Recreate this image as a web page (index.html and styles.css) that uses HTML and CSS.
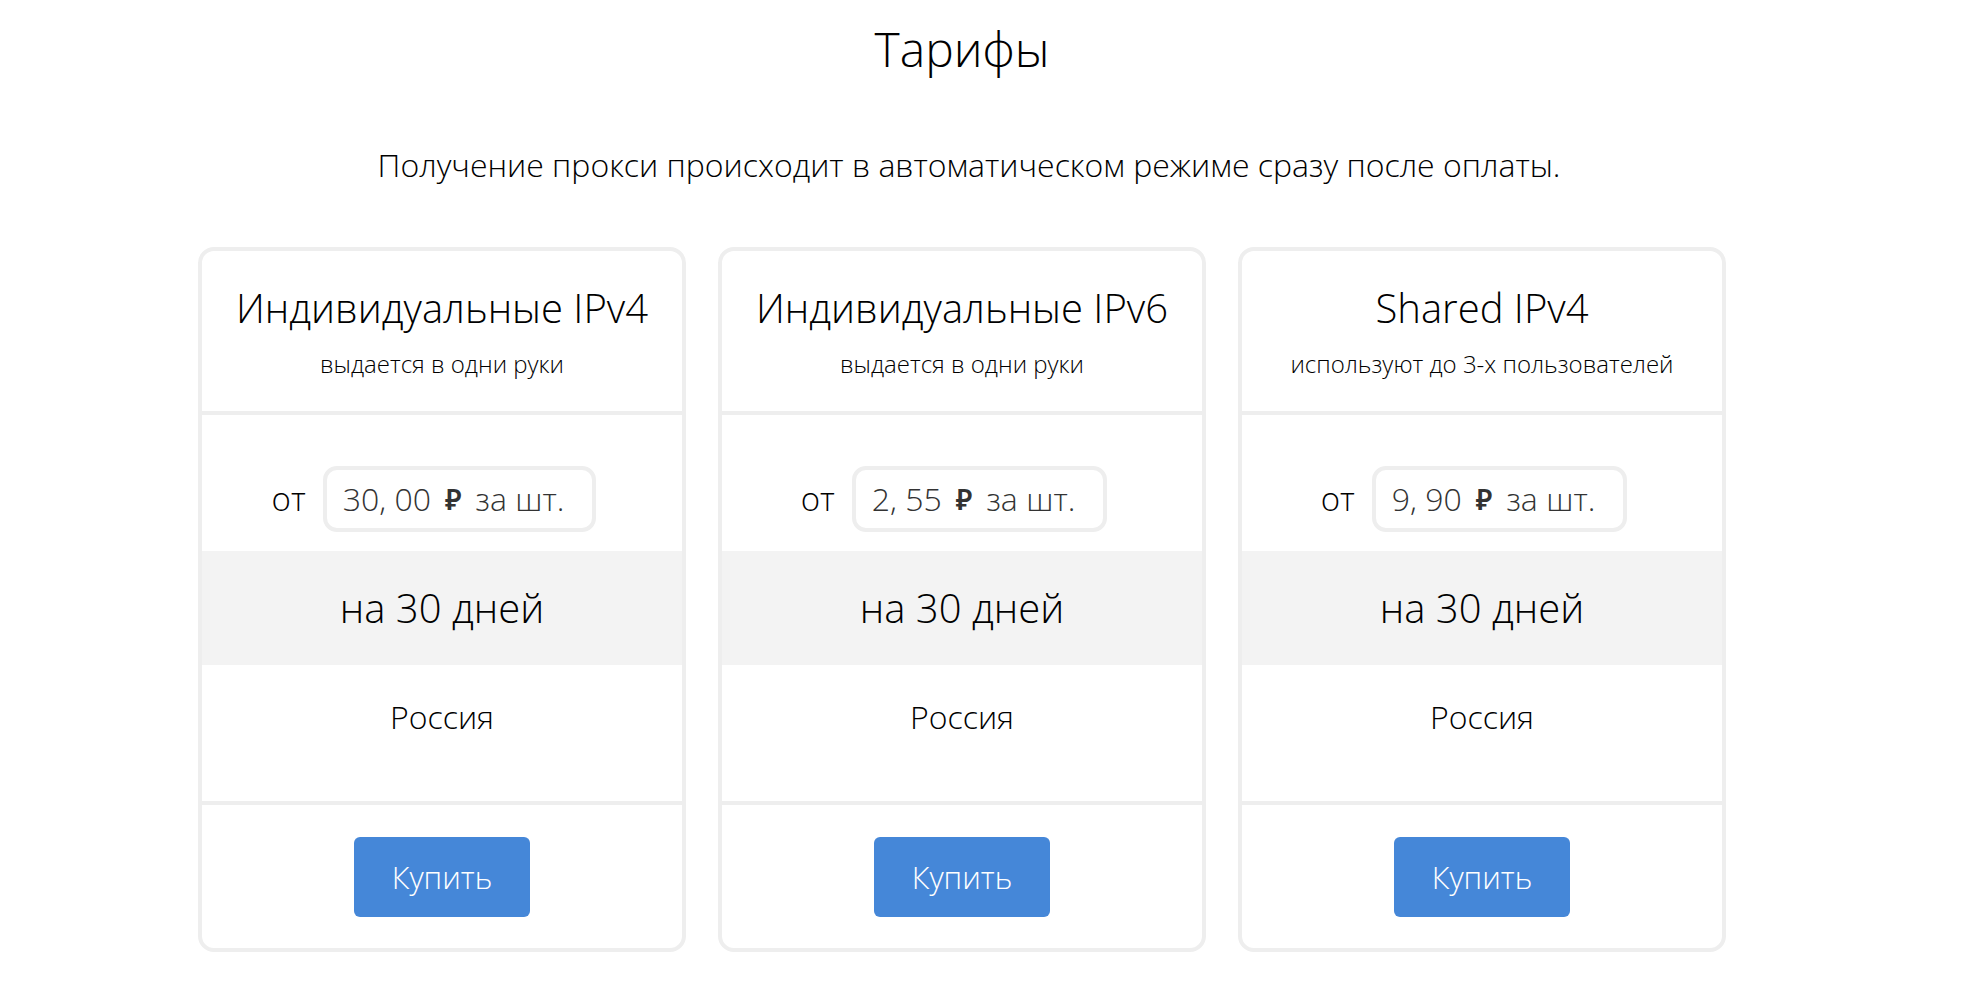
FILE: index.html
```html
<!DOCTYPE html>
<html lang="ru">
<head>
<meta charset="utf-8">
<title>Тарифы</title>
<link rel="stylesheet" href="styles.css">
</head>
<body>
<div class="page">
  <h1 class="title">Тарифы</h1>
  <p class="lead">Получение прокси происходит в автоматическом режиме сразу после оплаты.</p>
  <div class="plans">
    <div class="plan">
      <div class="plan-head">
        <h2 class="plan-name">Индивидуальные IPv4</h2>
        <div class="plan-note">выдается в одни руки</div>
      </div>
      <div class="plan-price">
        <span class="from">от</span>
        <span class="price-box"><span class="num">30, 00</span><span class="rub">₽</span><span class="unit">за шт.</span></span>
      </div>
      <div class="plan-term">на 30 дней</div>
      <div class="plan-country">Россия</div>
      <div class="plan-foot"><button class="buy">Купить</button></div>
    </div>
    <div class="plan">
      <div class="plan-head">
        <h2 class="plan-name">Индивидуальные IPv6</h2>
        <div class="plan-note">выдается в одни руки</div>
      </div>
      <div class="plan-price">
        <span class="from">от</span>
        <span class="price-box"><span class="num">2, 55</span><span class="rub">₽</span><span class="unit">за шт.</span></span>
      </div>
      <div class="plan-term">на 30 дней</div>
      <div class="plan-country">Россия</div>
      <div class="plan-foot"><button class="buy">Купить</button></div>
    </div>
    <div class="plan">
      <div class="plan-head">
        <h2 class="plan-name">Shared IPv4</h2>
        <div class="plan-note">используют до 3-х пользователей</div>
      </div>
      <div class="plan-price">
        <span class="from">от</span>
        <span class="price-box"><span class="num">9, 90</span><span class="rub">₽</span><span class="unit">за шт.</span></span>
      </div>
      <div class="plan-term">на 30 дней</div>
      <div class="plan-country">Россия</div>
      <div class="plan-foot"><button class="buy">Купить</button></div>
    </div>
  </div>
</div>
</body>
</html>
```
FILE: styles.css
```css
html, body {
  margin: 0;
  padding: 0;
  background: #fff;
}
body {
  font-family: "Open Sans", "Noto Sans", sans-serif;
  font-weight: 300;
  color: #000;
}
.page {
  width: 1924px;
  text-align: center;
}
.title {
  margin: 19px 0 0;
  font-size: 48px;
  line-height: 60px;
  font-weight: 300;
}
.lead {
  margin: 66px 0 0;
  padding-left: 14px;
  font-size: 32px;
  line-height: 40px;
}
.plans {
  margin: 62px auto 0;
  width: 1528px;
  display: grid;
  grid-template-columns: repeat(3, 488px);
  gap: 32px;
}
.plan {
  border: 4px solid #eee;
  border-radius: 16px;
  display: flex;
  flex-direction: column;
  overflow: hidden;
}
.plan-head {
  padding: 29px 0 31px;
  border-bottom: 4px solid #eee;
}
.plan-name {
  margin: 0 0 12px;
  font-size: 40px;
  line-height: 56px;
  font-weight: 300;
}
.plan-note {
  font-size: 24px;
  line-height: 32px;
}
.plan-price {
  padding: 51px 16px 19px 0;
  display: flex;
  justify-content: center;
  align-items: center;
  gap: 17px;
  font-size: 33px;
}
.from {
  line-height: 58px;
}
.price-box {
  display: inline-flex;
  align-items: center;
  border: 4px solid #eee;
  border-radius: 14px;
  padding: 0 28px 0 16px;
  font-size: 32px;
  line-height: 58px;
  color: #333;
  gap: 14px;
}
.rub {
  font-weight: 600;
  font-size: 28px;
}
.plan-term {
  background: #f3f3f3;
  font-size: 40px;
  line-height: 114px;
}
.plan-country {
  padding: 29px 0 61px;
  font-size: 32px;
  line-height: 46px;
  border-bottom: 4px solid #eee;
}
.plan-foot {
  padding: 32px 0 31px;
  display: flex;
  justify-content: center;
}
.buy {
  width: 176px;
  height: 80px;
  border: 0;
  border-radius: 6px;
  background: #4587d8;
  color: #fff;
  font-family: inherit;
  font-weight: 300;
  font-size: 31px;
  padding: 0;
}
```
